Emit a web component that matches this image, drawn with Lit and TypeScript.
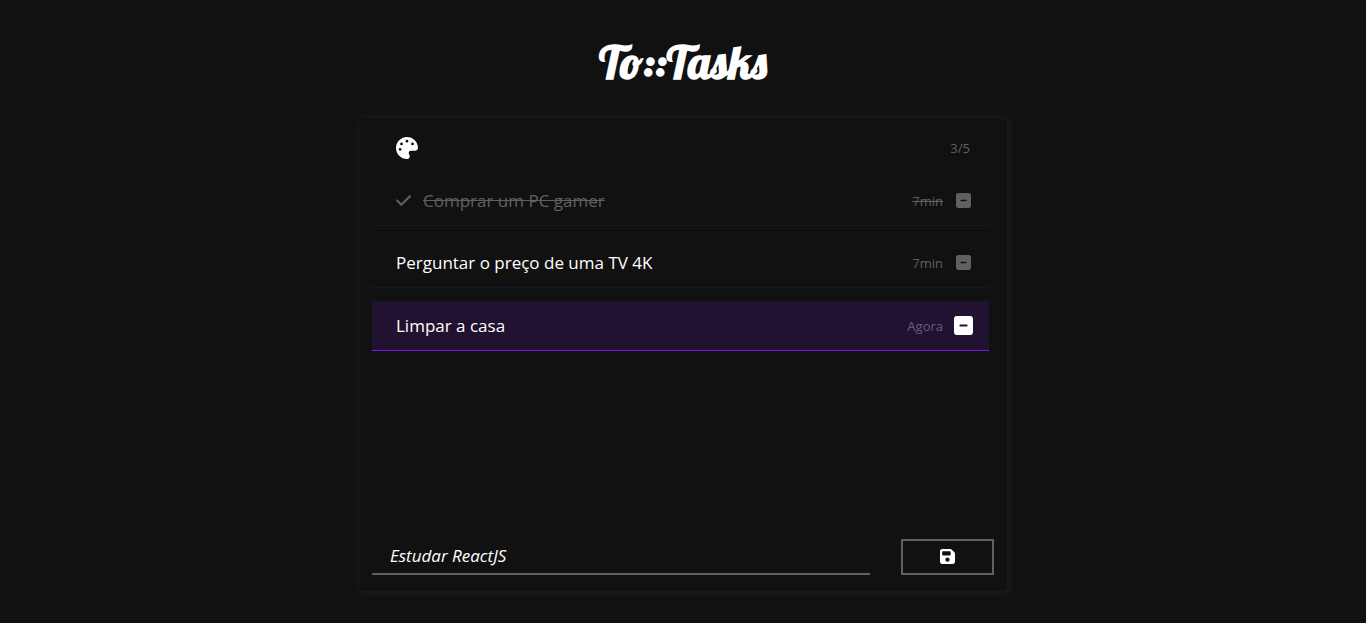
import { LitElement, html, css, svg } from "lit";
import { customElement, state } from "lit/decorators.js";
import { classMap } from "lit/directives/class-map.js";

interface Task {
  name: string;
  time: string;
  done?: boolean;
  active?: boolean;
}

const icons = {
  palette: svg`<path fill-rule="evenodd" d="M512 256c0 .9 0 1.8 0 2.7c-.4 36.5-33.6 61.3-70.1 61.3H344c-26.5 0-48 21.5-48 48c0 3.4 .4 6.7 1 9.9c2.1 10.2 6.5 20 10.8 29.9c6.1 13.8 12.1 27.5 12.1 42c0 31.8-21.6 60.7-53.4 62c-3.5 .1-7 .2-10.6 .2C114.6 512 0 397.4 0 256S114.6 0 256 0S512 114.6 512 256zM128 288a32 32 0 1 0 -64 0 32 32 0 1 0 64 0zm0-96a32 32 0 1 0 0-64 32 32 0 1 0 0 64zM288 96a32 32 0 1 0 -64 0 32 32 0 1 0 64 0zm96 96a32 32 0 1 0 0-64 32 32 0 1 0 0 64z"/>`,
  check: svg`<path d="M438.6 105.4c12.5 12.5 12.5 32.8 0 45.3l-256 256c-12.5 12.5-32.8 12.5-45.3 0l-128-128c-12.5-12.5-12.5-32.8 0-45.3s32.8-12.5 45.3 0L160 338.7 393.4 105.4c12.5-12.5 32.8-12.5 45.3 0z"/>`,
  minus: svg`<path fill-rule="evenodd" d="M64 32C28.7 32 0 60.7 0 96V416c0 35.3 28.7 64 64 64H384c35.3 0 64-28.7 64-64V96c0-35.3-28.7-64-64-64H64zm88 200H296c13.3 0 24 10.7 24 24s-10.7 24-24 24H152c-13.3 0-24-10.7-24-24s10.7-24 24-24z"/>`,
  save: svg`<path fill-rule="evenodd" d="M64 32C28.7 32 0 60.7 0 96V416c0 35.3 28.7 64 64 64H384c35.3 0 64-28.7 64-64V173.3c0-17-6.7-33.3-18.7-45.3L352 50.7C340 38.7 323.7 32 306.7 32H64zm0 96c0-17.7 14.3-32 32-32H288c17.7 0 32 14.3 32 32v64c0 17.7-14.3 32-32 32H96c-17.7 0-32-14.3-32-32V128zM224 288a64 64 0 1 1 0 128 64 64 0 1 1 0-128z"/>`,
};

@customElement("app-root")
export class AppRoot extends LitElement {
  static styles = css`
    :host {
      display: flex;
      flex-direction: column;
      align-items: center;
      box-sizing: border-box;
      min-height: 100vh;
      padding: 30px 16px 32px;
      background: #111;
      color: #fff;
      font-family: "Open Sans", sans-serif;
    }
    * {
      box-sizing: border-box;
    }
    svg {
      display: block;
      fill: currentColor;
    }
    button {
      display: flex;
      align-items: center;
      justify-content: center;
      padding: 0;
      border: 0;
      background: none;
      color: inherit;
      cursor: pointer;
    }
    .title {
      margin: 0 0 24px;
      font-family: Lobster, "Liberation Serif", cursive;
      font-size: 45px;
      font-weight: 700;
      line-height: 64px;
    }
    .card {
      display: flex;
      flex-direction: column;
      width: 100%;
      max-width: 648px;
      padding: 14px 13px 16px;
      border-radius: 5px;
      box-shadow: 1px 1px 7px 1px #202020;
    }
    .top {
      display: flex;
      align-items: center;
      justify-content: space-between;
      height: 32px;
      margin-bottom: 12px;
      padding: 0 24px;
    }
    .muted {
      color: #606060;
      font-size: 13px;
    }
    .list {
      display: flex;
      flex-direction: column;
      gap: 12px;
      min-height: 363px;
      margin: 0;
      padding: 0 5px 0 0;
      list-style: none;
    }
    .task {
      display: flex;
      align-items: center;
      height: 50px;
      padding: 0 16px 0 24px;
      border-bottom: 1px solid #221231;
      font-size: 17px;
    }
    .tick {
      margin-right: 12px;
    }
    .name {
      flex: 1;
    }
    .time {
      margin-right: 10px;
      color: #606060;
      font-size: 13px;
    }
    .remove {
      width: 20px;
      height: 22px;
      color: #606060;
    }
    .done {
      color: #606060;
    }
    .done .name,
    .done .time {
      text-decoration: line-through;
    }
    .active {
      margin-top: 1px;
      background: #221231;
      border-color: #7a18e8;
    }
    .active .time {
      color: #695c75;
    }
    .active .remove {
      color: #fff;
    }
    .form {
      display: flex;
      gap: 31px;
    }
    .field {
      flex: 1;
      min-width: 0;
      height: 36px;
      padding: 0 18px 2px;
      border: 0;
      border-bottom: 2px solid #606060;
      outline: 0;
      background: none;
      color: #fff;
      font: italic 17px "Open Sans", sans-serif;
    }
    .save {
      width: 93px;
      height: 36px;
      padding-bottom: 1px;
      border: 2px solid #606060;
    }
  `;

  @state() private tasks: Task[] = [
    { name: "Comprar um PC gamer", time: "7min", done: true },
    { name: "Perguntar o preço de uma TV 4K", time: "7min" },
    { name: "Limpar a casa", time: "Agora", active: true },
  ];

  private renderTask(task: Task) {
    const size = task.active ? 19 : 15;
    return html`
      <li class=${classMap({ task: true, done: !!task.done, active: !!task.active })}>
        ${task.done
          ? html`<svg class="tick" width="15" height="17" viewBox="0 0 448 512">${icons.check}</svg>`
          : ""}
        <span class="name">${task.name}</span>
        <span class="time">${task.time}</span>
        <button class="remove" type="button" aria-label="Remover">
          <svg width=${size} height=${size} viewBox="0 32 448 448">${icons.minus}</svg>
        </button>
      </li>
    `;
  }

  render() {
    return html`
      <h1 class="title">To::Tasks</h1>
      <main class="card">
        <header class="top">
          <button type="button" aria-label="Tema">
            <svg width="22" height="22" viewBox="0 0 512 512">${icons.palette}</svg>
          </button>
          <span class="muted">3/5</span>
        </header>
        <ul class="list">
          ${this.tasks.map((task) => this.renderTask(task))}
        </ul>
        <form class="form" @submit=${(e: Event) => e.preventDefault()}>
          <input class="field" type="text" aria-label="Tarefa" value="Estudar ReactJS" />
          <button class="save" type="submit" aria-label="Salvar">
            <svg width="15" height="15" viewBox="0 32 448 448">${icons.save}</svg>
          </button>
        </form>
      </main>
    `;
  }
}
